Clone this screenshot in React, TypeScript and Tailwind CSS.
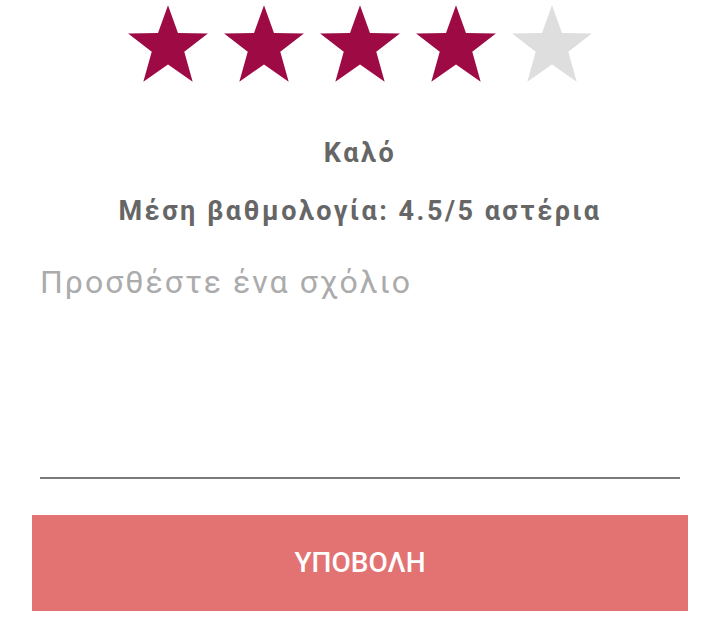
const STAR = "40,3 49.5,29.5 78,30 55.5,47.5 63.5,76 40,59.5 16.5,76 24.5,47.5 2,30 30.5,29.5";

function Star({ filled }: { filled: boolean }) {
  return (
    <svg width="84" height="84" viewBox="0 0 80 80">
      <polygon points={STAR} fill={filled ? "#9e0a44" : "#dedede"} />
    </svg>
  );
}

export default function App() {
  const rating = 4;
  return (
    <div className="w-[720px] h-[635px] bg-white flex flex-col font-['Roboto',sans-serif]">
      <div className="flex justify-center gap-3 pt-[2px]">
        {[1, 2, 3, 4, 5].map((i) => (
          <Star key={i} filled={i <= rating} />
        ))}
      </div>

      <p className="mt-[51px] text-center text-[27px] leading-[32px] font-bold tracking-[2.5px] text-[#666666]">
        Καλό
      </p>
      <p className="mt-[26px] text-center text-[27px] leading-[32px] font-bold tracking-[2.5px] text-[#666666]">
        Μέση βαθμολογία: 4.5/5 αστέρια
      </p>

      <div className="mx-[40px] mt-[35px] h-[217px] border-b-2 border-[#7a7a7a]">
        <p className="text-[32px] leading-[40px] tracking-[2px] text-[#ababab]">Προσθέστε ένα σχόλιο</p>
      </div>

      <button className="mx-[32px] mt-[36px] h-[96px] bg-[#e37272] text-white text-[28px] font-medium">
        ΥΠΟΒΟΛΗ
      </button>
    </div>
  );
}
